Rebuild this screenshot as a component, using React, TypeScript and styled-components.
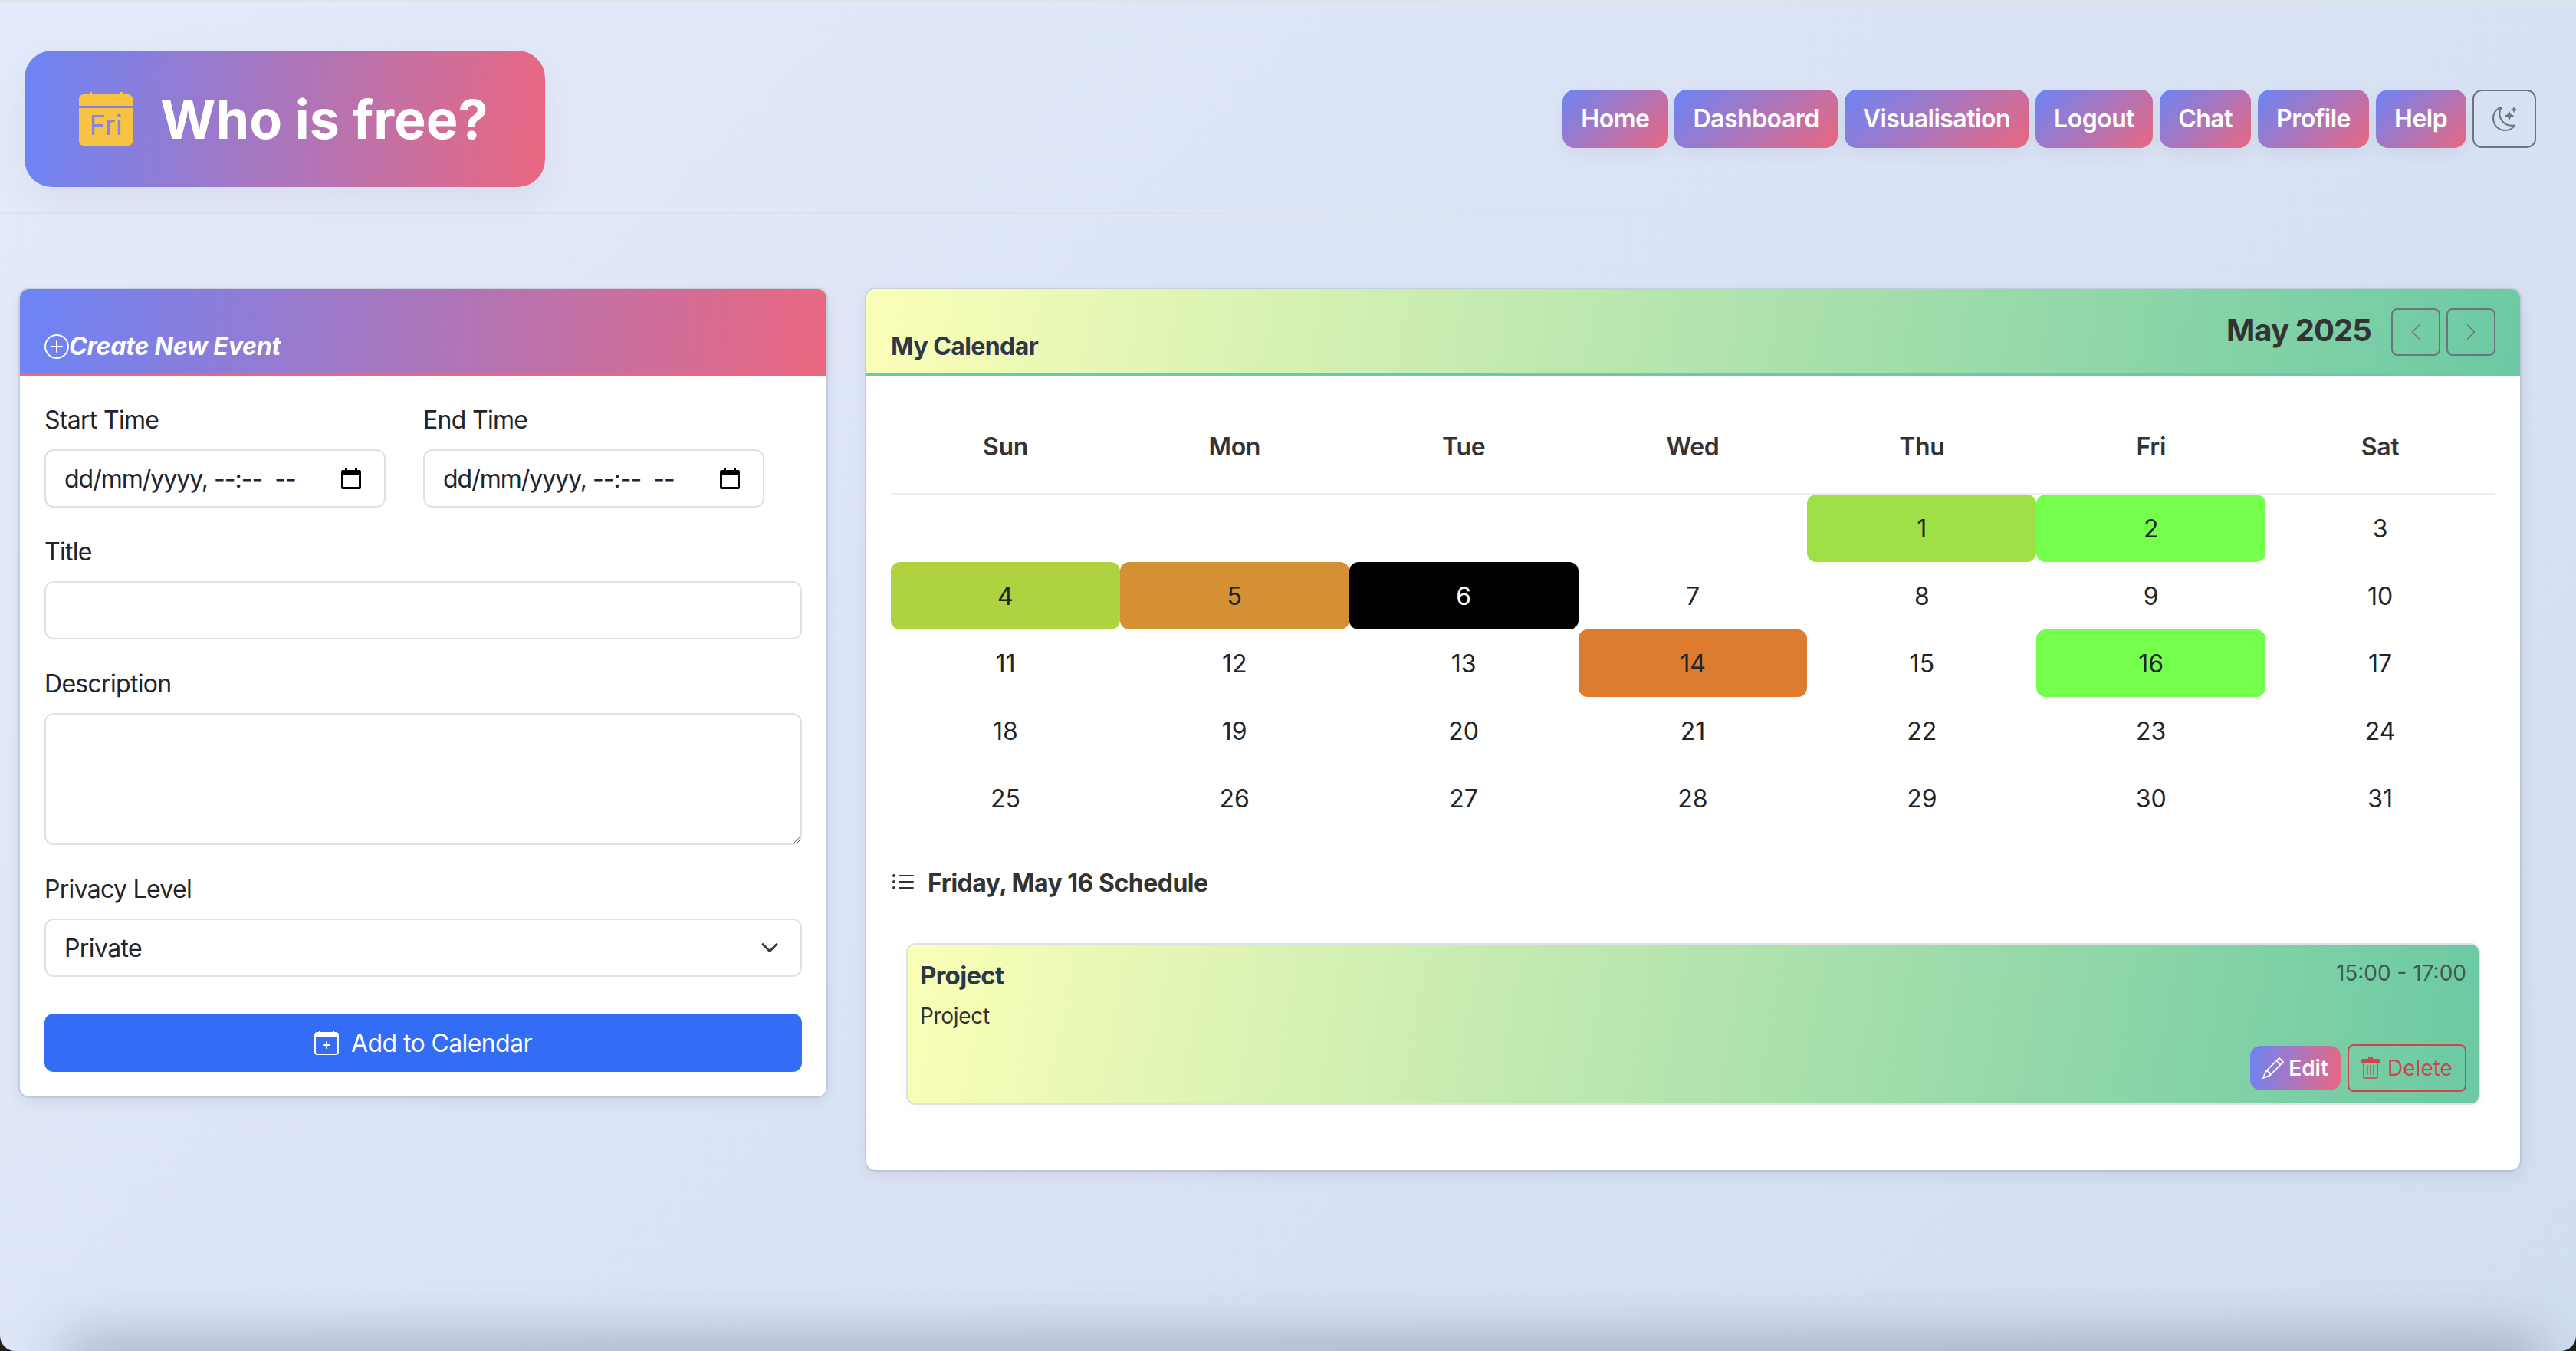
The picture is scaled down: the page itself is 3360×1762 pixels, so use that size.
import React from "react";
import styled, { createGlobalStyle } from "styled-components";
import { BsPlusCircle, BsCalendarPlus, BsMoonStars, BsListUl, BsChevronLeft, BsChevronRight, BsPencil } from "react-icons/bs";

const PINK_BLUE = "#6c84f6, #ea6780";
const YELLOW_GREEN = "#fbffb8, #6bc9a3";

const Global = createGlobalStyle`
  html, body { margin: 0; padding: 0; }
  body { font-family: Inter, "Liberation Sans", sans-serif; color: #212529; }
  * { box-sizing: border-box; }
`;

const Page = styled.div`
  position: relative;
  width: 3360px;
  height: 1762px;
  overflow: hidden;
  background: linear-gradient(135deg, #e3eafb, #d1ddf0);
  border-top: 3px solid #dfe2e6;
`;

const BottomShade = styled.div`
  position: absolute;
  left: 100px;
  right: 60px;
  bottom: -30px;
  height: 30px;
  box-shadow: 0 0 70px 14px rgba(40, 50, 70, 0.33);
`;

const WindowCorners = styled.div`
  position: absolute;
  inset: -3px 0 0 0;
  border-radius: 0 0 20px 20px;
  box-shadow: 0 0 0 40px #1d2119;
  clip-path: inset(1700px 0 0 0);
  pointer-events: none;
`;

const Header = styled.header`
  height: 276px;
  display: flex;
  align-items: center;
  justify-content: space-between;
  padding: 30px 52px 0 32px;
  border-bottom: 2px solid #dde1ea;
`;

const Logo = styled.div`
  width: 679px;
  height: 178px;
  display: flex;
  align-items: center;
  gap: 36px;
  padding-left: 71px;
  border-radius: 36px;
  background: linear-gradient(95deg, ${PINK_BLUE});
  box-shadow: 0 16px 48px rgba(0, 0, 0, 0.05);
`;

const LogoText = styled.h1`
  margin: 2px 0 0;
  font-size: 70px;
  font-weight: 700;
  color: #fff;
  line-height: 1;
`;

const Nav = styled.nav`
  display: flex;
  gap: 8.5px;
`;

const NavButton = styled.button`
  height: 76px;
  padding: 0 24.3px 2px;
  border: 0;
  border-radius: 16px;
  background: linear-gradient(135deg, ${PINK_BLUE});
  color: #fff;
  font: 600 32px Inter, sans-serif;
  letter-spacing: -0.5px;
  box-shadow: 0 8px 24px rgba(0, 0, 0, 0.05);
`;

const ThemeButton = styled.button`
  width: 83px;
  height: 76px;
  display: flex;
  align-items: center;
  justify-content: center;
  padding: 0;
  background: transparent;
  border: 2px solid #6c757d;
  border-radius: 12px;
  color: #6c757d;
  font-size: 32px;
`;

const Main = styled.main`
  display: flex;
  align-items: flex-start;
  gap: 52px;
  padding: 98px 0 0 26px;
`;

const Card = styled.section<{ $w: number }>`
  width: ${(p) => p.$w}px;
  background: #fff;
  border-radius: 12px;
  box-shadow: 0 0 0 2px rgba(0, 0, 0, 0.08), 0 6px 20px rgba(0, 0, 0, 0.08);
  overflow: hidden;
`;

const FormHeader = styled.div`
  height: 113px;
  display: flex;
  align-items: flex-end;
  padding: 0 32px 10px;
  background: linear-gradient(95deg, ${PINK_BLUE});
  border-bottom: 4px solid #ea6780;
  color: #fff;
`;

const FormTitle = styled.h2`
  display: flex;
  align-items: center;
  margin: 0;
  font-size: 32px;
  line-height: 48px;
  font-style: italic;
  font-weight: 700;
  letter-spacing: -0.2px;
  svg { font-size: 32px; }
`;

const FormBody = styled.form`
  display: flex;
  flex-direction: column;
  padding: 32px 32px 32px;
`;

const TimeRow = styled.div`
  display: flex;
  gap: 49px;
  margin-bottom: 32px;
`;

const Field = styled.div<{ $mb?: number }>`
  display: flex;
  flex-direction: column;
  margin-bottom: ${(p) => p.$mb ?? 32}px;
`;

const Label = styled.label`
  font-size: 32px;
  line-height: 48px;
  padding-top: 2px;
  margin-bottom: 14px;
  letter-spacing: -0.7px;
`;

const inputStyle = `
  background: #fff;
  border: 2px solid #dee2e6;
  border-radius: 12px;
  font: 400 32px Inter, sans-serif;
  color: #212529;
`;

const DateBox = styled.div`
  ${inputStyle}
  width: 445px;
  height: 76px;
  display: flex;
  align-items: center;
  justify-content: space-between;
  padding: 0 30px 0 24px;
  white-space: pre;
  letter-spacing: -1px;
`;

const TextBox = styled.input`
  ${inputStyle}
  width: 100%;
  height: 76px;
`;

const TextArea = styled.textarea`
  ${inputStyle}
  width: 100%;
  height: 172px;
  display: block;
`;

const SelectBox = styled.div`
  ${inputStyle}
  height: 76px;
  display: flex;
  align-items: center;
  justify-content: space-between;
  padding: 0 28px 0 24px;
  letter-spacing: -0.6px;
`;

const SubmitButton = styled.button`
  height: 76px;
  display: flex;
  align-items: center;
  justify-content: center;
  gap: 16px;
  border: 0;
  border-radius: 12px;
  background: #336df5;
  color: #fff;
  font: 400 32px Inter, sans-serif;
  letter-spacing: -0.6px;
`;

const CalHeader = styled.div`
  height: 113px;
  display: flex;
  align-items: flex-end;
  justify-content: space-between;
  padding: 0 32px;
  background: linear-gradient(100deg, ${YELLOW_GREEN});
  border-bottom: 4px solid #6bc9a3;
`;

const CalTitle = styled.h2`
  margin: 0 0 10px;
  font-size: 32px;
  line-height: 48px;
  font-weight: 700;
  color: #2d3748;
  letter-spacing: -0.6px;
`;

const MonthBar = styled.div`
  display: flex;
  align-items: center;
  gap: 8px;
  margin-bottom: 22px;
`;

const MonthLabel = styled.div`
  margin: 0 18px 5px 0;
  font-size: 40px;
  font-weight: 700;
  color: #333;
  letter-spacing: -0.9px;
`;

const MonthButton = styled.button`
  width: 64px;
  height: 62px;
  display: flex;
  align-items: center;
  justify-content: center;
  padding: 0;
  background: transparent;
  border: 2px solid #6c757d;
  border-radius: 8px;
  color: #6c757d;
  font-size: 24px;
`;

const CalBody = styled.div`
  padding: 32px 33px 0 32px;
`;

const WeekHead = styled.div`
  display: grid;
  grid-template-columns: repeat(7, 1fr);
  height: 123px;
  align-items: center;
  border-bottom: 2px solid #eee;
`;

const WeekDay = styled.div`
  text-align: center;
  font-size: 32px;
  font-weight: 600;
  color: #333;
  letter-spacing: -0.3px;
`;

const DayGrid = styled.div`
  display: grid;
  grid-template-columns: repeat(7, 1fr);
  grid-auto-rows: 88px;
`;

const Day = styled.div<{ $bg?: string; $dark?: boolean }>`
  display: flex;
  align-items: center;
  justify-content: center;
  font-size: 32px;
  border-radius: 12px;
  background: ${(p) => p.$bg ?? "transparent"};
  color: ${(p) => (p.$dark ? "#fff" : "#212529")};
`;

const ScheduleTitle = styled.h3`
  display: flex;
  align-items: center;
  gap: 16px;
  margin: 42px 0 0;
  height: 48px;
  font-size: 32px;
  font-weight: 700;
  color: #333;
  letter-spacing: -0.5px;
  svg { font-size: 32px; font-weight: 400; }
`;

const EventCard = styled.article`
  position: relative;
  height: 211px;
  margin: 55px 19px 85px 20px;
  padding: 16px;
  border: 2px solid #dee2e6;
  border-radius: 12px;
  background: linear-gradient(100deg, ${YELLOW_GREEN});
  box-shadow: 0 4px 16px rgba(0, 0, 0, 0.03);
  display: flex;
  flex-direction: column;
  justify-content: space-between;
`;

const EventTop = styled.div`
  display: flex;
  justify-content: space-between;
`;

const EventName = styled.div`
  font-size: 33px;
  font-weight: 700;
  line-height: 48px;
  color: #2d3748;
  letter-spacing: -0.7px;
`;

const EventDesc = styled.div`
  margin-top: 8px;
  font-size: 28px;
  line-height: 42px;
  color: #333;
  letter-spacing: -0.3px;
`;

const EventTime = styled.div`
  font-size: 28px;
  line-height: 42px;
  color: #3c5a50;
`;

const EventActions = styled.div`
  position: absolute;
  right: 16px;
  bottom: 15px;
  display: flex;
  align-items: center;
  gap: 9px;
`;

const EditButton = styled.button`
  width: 118px;
  height: 58px;
  display: flex;
  align-items: center;
  justify-content: center;
  gap: 6px;
  padding: 0;
  border: 0;
  border-radius: 14px;
  background: linear-gradient(100deg, ${PINK_BLUE});
  color: #fff;
  font: 600 28px Inter, sans-serif;
`;

const DeleteButton = styled.button`
  width: 155px;
  height: 62px;
  display: flex;
  align-items: center;
  justify-content: center;
  gap: 10px;
  padding: 0;
  background: transparent;
  border: 2px solid #cf444f;
  border-radius: 8px;
  color: #cf444f;
  font: 400 28px Inter, sans-serif;
`;

const CalendarGlyph = () => (
  <svg width="70" height="70" viewBox="0 0 70 70" aria-hidden>
    <path d="M14 0h3v5h-3zM54 0h3v5h-3z" fill="#f8c243" />
    <path d="M6 3h58a6 6 0 0 1 6 6v9H0V9a6 6 0 0 1 6-6z" fill="#f8c243" />
    <path d="M0 21h70v43a6 6 0 0 1-6 6H6a6 6 0 0 1-6-6z" fill="#f8c243" />
    <text x="35" y="56" textAnchor="middle" fontSize="36" fontFamily="Inter, sans-serif" fill="#8a85d9">Fri</text>
  </svg>
);

const DatePickerGlyph = () => (
  <svg width="26" height="28" viewBox="0 0 26 28" aria-hidden>
    <path d="M5 0h3v3h10V0h3v3h3a2 2 0 0 1 2 2v21a2 2 0 0 1-2 2H2a2 2 0 0 1-2-2V5a2 2 0 0 1 2-2h3z M3 9v16h20V9z" fill="#000" fillRule="evenodd" />
  </svg>
);

const SelectChevron = () => (
  <svg width="24" height="24" viewBox="0 0 16 16" aria-hidden>
    <path d="m2 5 6 6 6-6" fill="none" stroke="#343a40" strokeWidth="2" strokeLinecap="round" strokeLinejoin="round" />
  </svg>
);

const TrashGlyph = () => (
  <svg width="24" height="28" viewBox="0 0 24 28" aria-hidden>
    <path d="M9 0h6v2h7a2 2 0 0 1 2 2v3H0V4a2 2 0 0 1 2-2h7z" fill="currentColor" />
    <path d="M3 7v18a2 2 0 0 0 2 2h14a2 2 0 0 0 2-2V7" fill="none" stroke="currentColor" strokeWidth="2" opacity="0.8" />
    <path d="M8 10v13M12 10v13M16 10v13" fill="none" stroke="currentColor" strokeWidth="1.6" opacity="0.8" />
  </svg>
);

const navItems = ["Home", "Dashboard", "Visualisation", "Logout", "Chat", "Profile", "Help"];
const weekDays = ["Sun", "Mon", "Tue", "Wed", "Thu", "Fri", "Sat"];
const highlights: Record<number, string> = {
  1: "#a0e047",
  2: "#73ff4c",
  4: "#aed240",
  5: "#d49033",
  6: "#000",
  14: "#dd7b2e",
  16: "#73ff4c",
};

export default function App() {
  return (
    <Page>
      <Global />
      <Header>
        <Logo>
          <CalendarGlyph />
          <LogoText>Who is free?</LogoText>
        </Logo>
        <Nav>
          {navItems.map((n) => (
            <NavButton key={n}>{n}</NavButton>
          ))}
          <ThemeButton aria-label="Theme"><BsMoonStars /></ThemeButton>
        </Nav>
      </Header>
      <Main>
        <Card $w={1052}>
          <FormHeader>
            <FormTitle><BsPlusCircle />Create New Event</FormTitle>
          </FormHeader>
          <FormBody>
            <TimeRow>
              <Field $mb={0}>
                <Label>Start Time</Label>
                <DateBox>dd/mm/yyyy, --:--  --<DatePickerGlyph /></DateBox>
              </Field>
              <Field $mb={0}>
                <Label>End Time</Label>
                <DateBox>dd/mm/yyyy, --:--  --<DatePickerGlyph /></DateBox>
              </Field>
            </TimeRow>
            <Field>
              <Label>Title</Label>
              <TextBox readOnly />
            </Field>
            <Field>
              <Label>Description</Label>
              <TextArea readOnly />
            </Field>
            <Field $mb={48}>
              <Label>Privacy Level</Label>
              <SelectBox>Private<SelectChevron /></SelectBox>
            </Field>
            <SubmitButton type="button"><BsCalendarPlus />Add to Calendar</SubmitButton>
          </FormBody>
        </Card>
        <Card $w={2157}>
          <CalHeader>
            <CalTitle>My Calendar</CalTitle>
            <MonthBar>
              <MonthLabel>May 2025</MonthLabel>
              <MonthButton aria-label="Previous"><BsChevronLeft /></MonthButton>
              <MonthButton aria-label="Next"><BsChevronRight /></MonthButton>
            </MonthBar>
          </CalHeader>
          <CalBody>
            <WeekHead>
              {weekDays.map((d) => (
                <WeekDay key={d}>{d}</WeekDay>
              ))}
            </WeekHead>
            <DayGrid>
              {Array.from({ length: 4 }).map((_, i) => (
                <div key={`e${i}`} />
              ))}
              {Array.from({ length: 31 }).map((_, i) => (
                <Day key={i} $bg={highlights[i + 1]} $dark={i + 1 === 6}>{i + 1}</Day>
              ))}
            </DayGrid>
            <ScheduleTitle><BsListUl />Friday, May 16 Schedule</ScheduleTitle>
            <EventCard>
              <EventTop>
                <div>
                  <EventName>Project</EventName>
                  <EventDesc>Project</EventDesc>
                </div>
                <EventTime>15:00 - 17:00</EventTime>
              </EventTop>
              <EventActions>
                <EditButton><BsPencil />Edit</EditButton>
                <DeleteButton><TrashGlyph />Delete</DeleteButton>
              </EventActions>
            </EventCard>
          </CalBody>
        </Card>
      </Main>
      <BottomShade />
      <WindowCorners />
    </Page>
  );
}
